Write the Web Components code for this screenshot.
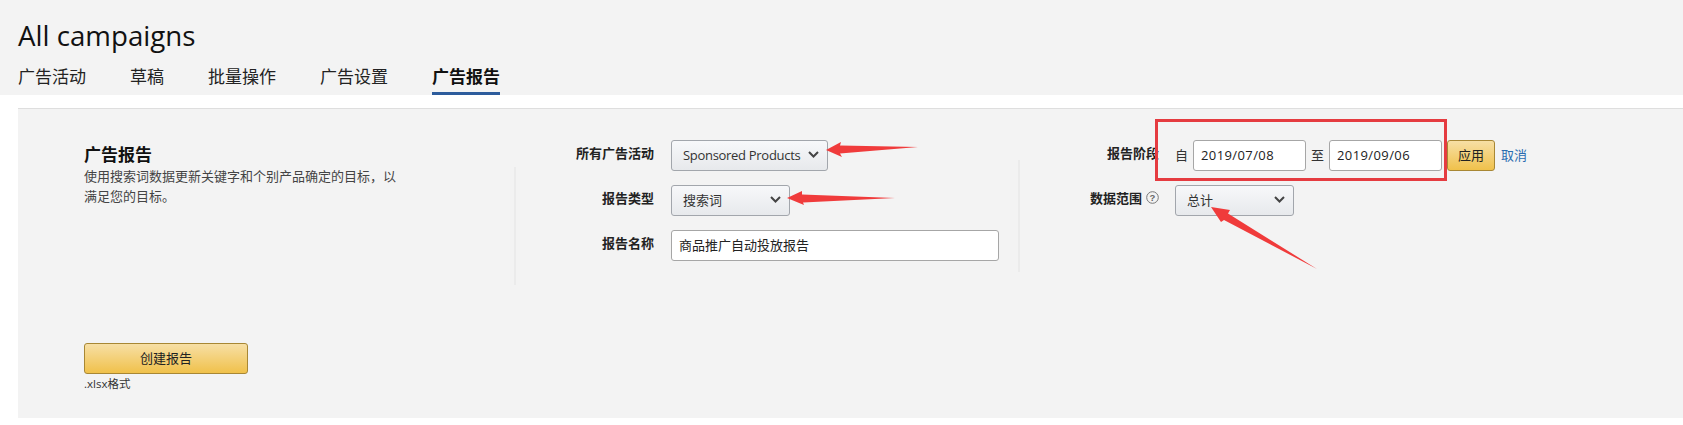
<!DOCTYPE html>
<html lang="zh">
<head>
<meta charset="utf-8">
<title>All campaigns</title>
<style>
html, body { margin: 0; background: #fff; }
body {
  position: relative;
  width: 1683px;
  height: 425px;
  overflow: hidden;
  font-family: "Open Sans", "Noto Sans CJK SC", sans-serif;
  color: #111;
}
</style>
</head>
<body>
<campaign-header title-text="All campaigns">
  <a class="tab">广告活动</a>
  <a class="tab">草稿</a>
  <a class="tab">批量操作</a>
  <a class="tab">广告设置</a>
  <a class="tab" active>广告报告</a>
</campaign-header>

<report-panel>
  <div slot="intro" class="intro-title">广告报告</div>
  <div slot="intro" class="intro-text">使用搜索词数据更新关键字和个别产品确定的目标，以满足您的目标。</div>

  <form-row slot="middle" label="所有广告活动"><drop-select width="157" style="letter-spacing:-.3px">Sponsored Products</drop-select></form-row>
  <form-row slot="middle" label="报告类型"><drop-select width="119">搜索词</drop-select></form-row>
  <form-row slot="middle" label="报告名称"><text-field width="328" value="商品推广自动投放报告"></text-field></form-row>

  <form-row slot="right" label="报告阶段" wide>
    <date-range from="2019/07/08" to="2019/09/06"></date-range>
  </form-row>
  <form-row slot="right" label="数据范围" wide help><drop-select width="119">总计</drop-select></form-row>

  <gold-button slot="action" width="164">创建报告</gold-button>
  <div slot="action" class="hint">.xlsx格式</div>
</report-panel>

<markup-layer></markup-layer>

<script>
const CJK = '"Open Sans", "Noto Sans CJK SC", sans-serif';

class CampaignHeader extends HTMLElement {
	constructor() {
		super();
		this.attachShadow({ mode: "open" });
		this.shadowRoot.innerHTML = `
    <style>
    :host {
      display: block;
      height: 95px;
      background: #f3f3f3;
      padding-left: 18px;
      box-sizing: border-box;
    }
    h1 {
      margin: 0;
      padding-top: 17px;
      height: 45px;
      font: 400 27.700px/36px ${CJK};
      color: #111;
    }
    nav {
      display: flex;
      gap: 44px;
      height: 33px;
    }
    ::slotted(.tab) {
      display: block;
      height: 31px;
      font-size: 17px;
      line-height: 25px;
      padding-top: 2px;
      color: #222;
    }
    ::slotted(.tab[active]) {
      font-weight: 700;
      color: #111;
      height: 28px;
      border-bottom: 3px solid #2d5c9c;
    }
    </style>
    <h1></h1>
    <nav><slot></slot></nav>
    `;
		this.shadowRoot.querySelector("h1").textContent = this.getAttribute("title-text");
	}
}
customElements.define("campaign-header", CampaignHeader);

class ReportPanel extends HTMLElement {
	constructor() {
		super();
		this.attachShadow({ mode: "open" });
		this.shadowRoot.innerHTML = `
    <style>
    :host {
      display: block;
      margin: 13px 0 0 18px;
      height: 310px;
      box-sizing: border-box;
      background: #f3f3f3;
      border-top: 1px solid #dedede;
      padding: 31px 0 0 66px;
    }
    .top {
      display: grid;
      grid-template-columns: 430px 504px 1fr;
      height: 203px;
    }
    .col {
      background: linear-gradient(#ebebeb, #ebebeb) no-repeat 0 var(--rule-top) / 2px var(--rule-height);
    }
    .middle { --rule-top: 27px; --rule-height: 118px; }
    .right { --rule-top: 20px; --rule-height: 112px; }
    .intro { padding-top: 3px; width: 316px; }
    .stack { display: flex; flex-direction: column; gap: 14px; }
    ::slotted(.intro-title) {
      font-size: 17px;
      font-weight: 700;
      line-height: 23px;
      color: #111;
    }
    ::slotted(.intro-text) {
      font-size: 13px;
      line-height: 20px;
      color: #444;
    }
    ::slotted(.hint) {
      font-size: 11.500px;
      line-height: 18px;
      margin-top: 1px;
      color: #333;
    }
    </style>
    <div class="top">
      <div class="intro"><slot name="intro"></slot></div>
      <div class="col stack middle"><slot name="middle"></slot></div>
      <div class="col stack right"><slot name="right"></slot></div>
    </div>
    <div><slot name="action"></slot></div>
    `;
	}
}
customElements.define("report-panel", ReportPanel);

class FormRow extends HTMLElement {
	constructor() {
		super();
		this.attachShadow({ mode: "open" });
		const help = this.hasAttribute("help")
			? `<svg width="13" height="13" viewBox="0 0 13 13"><circle cx="6.500" cy="6.500" r="5.800" fill="none" stroke="#777"/><text x="6.500" y="10" text-anchor="middle" font-size="9.500" font-family="Liberation Sans" fill="#666">?</text></svg>`
			: "";
		this.shadowRoot.innerHTML = `
    <style>
    :host {
      display: flex;
      align-items: center;
      gap: 17px;
      height: 31px;
    }
    :host([wide]) { gap: 16px; }
    .label {
      width: 140px;
      flex: none;
      display: flex;
      justify-content: flex-end;
      align-items: center;
      gap: 4px;
      font-size: 13px;
      font-weight: 700;
      color: #222;
      padding-bottom: 6px;
      box-sizing: border-box;
    }
    :host([wide]) .label { width: 141px; }
    </style>
    <div class="label"><span>${this.getAttribute("label")}</span>${help}</div>
    <slot></slot>
    `;
	}
}
customElements.define("form-row", FormRow);

class DropSelect extends HTMLElement {
	constructor() {
		super();
		this.attachShadow({ mode: "open" });
		this.shadowRoot.innerHTML = `
    <style>
    :host {
      display: flex;
      align-items: center;
      justify-content: space-between;
      width: ${this.getAttribute("width")}px;
      height: 31px;
      box-sizing: border-box;
      padding: 0 8px 2px 11px;
      background: linear-gradient(#f7f8fa, #e7e9ec);
      border: 1px solid #a2a6ac;
      border-radius: 3px;
      font-size: 13px;
      color: #333;
    }
    svg { flex: none; }
    </style>
    <slot></slot>
    <svg width="11" height="7" viewBox="0 0 11 7"><path d="M1 1l4.500 4.500L10 1" fill="none" stroke="#444" stroke-width="2"/></svg>
    `;
	}
}
customElements.define("drop-select", DropSelect);

class TextField extends HTMLElement {
	constructor() {
		super();
		this.attachShadow({ mode: "open" });
		this.shadowRoot.innerHTML = `
    <style>
    :host {
      display: flex;
      align-items: center;
      width: ${this.getAttribute("width")}px;
      height: 31px;
      box-sizing: border-box;
      padding: 0 7px 2px;
      background: #fff;
      border: 1px solid #a6a6a6;
      border-radius: 3px;
      font-size: 13px;
      color: #222;
    }
    </style>
    <span>${this.getAttribute("value")}</span>
    `;
	}
}
customElements.define("text-field", TextField);

class DateRange extends HTMLElement {
	constructor() {
		super();
		this.attachShadow({ mode: "open" });
		this.shadowRoot.innerHTML = `
    <style>
    :host {
      display: flex;
      align-items: center;
      font-size: 13px;
      color: #333;
    }
    span { padding-bottom: 3px; }
    text-field { margin: 0 5px; letter-spacing: .4px; }
    a { margin-left: 6px; padding-bottom: 3px; color: #2a6cb0; }
    </style>
    <span>自</span>
    <text-field width="113" value="${this.getAttribute("from")}"></text-field>
    <span>至</span>
    <text-field width="113" value="${this.getAttribute("to")}"></text-field>
    <gold-button width="48">应用</gold-button>
    <a>取消</a>
    `;
	}
}
customElements.define("date-range", DateRange);

class GoldButton extends HTMLElement {
	constructor() {
		super();
		this.attachShadow({ mode: "open" });
		this.shadowRoot.innerHTML = `
    <style>
    :host {
      display: flex;
      align-items: center;
      justify-content: center;
      width: ${this.getAttribute("width")}px;
      height: 31px;
      box-sizing: border-box;
      padding-bottom: 2px;
      background: linear-gradient(#f7dfa5, #f0c14b);
      border: 1px solid #a88734;
      border-radius: 3px;
      font-size: 13px;
      color: #222;
    }
    </style>
    <slot></slot>
    `;
	}
}
customElements.define("gold-button", GoldButton);

class MarkupLayer extends HTMLElement {
	constructor() {
		super();
		this.attachShadow({ mode: "open" });
		this.shadowRoot.innerHTML = `
    <style>
    :host {
      position: absolute;
      left: 0;
      top: 0;
      width: 1683px;
      height: 425px;
      pointer-events: none;
    }
    svg { display: block; }
    </style>
    <svg width="1683" height="425" viewBox="0 0 1683 425">
      <rect x="1156.500" y="120.500" width="289" height="59" fill="none" stroke="#e53b40" stroke-width="3"/>
      <g fill="#f03b3b">
        <path d="M826 150L841 142L840 145.500L918 147L840 153.500L842 157Z"/>
        <path d="M787 198L802 191L802 194.500L895 198L803 202.500L804 205Z"/>
        <path d="M1211 207L1230 210L1228 213.500L1317 269L1224 220L1221 222Z"/>
      </g>
    </svg>
    `;
	}
}
customElements.define("markup-layer", MarkupLayer);
</script>
</body>
</html>
